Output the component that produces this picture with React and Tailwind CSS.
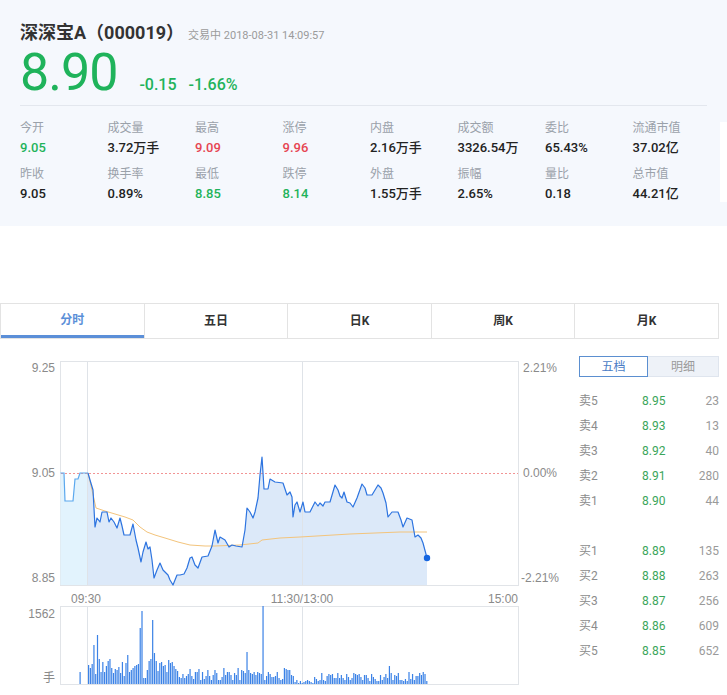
import React from "react";

const stats = [
  { label: "今开", value: "9.05", tone: "green" },
  { label: "成交量", value: "3.72万手" },
  { label: "最高", value: "9.09", tone: "red" },
  { label: "涨停", value: "9.96", tone: "red" },
  { label: "内盘", value: "2.16万手" },
  { label: "成交额", value: "3326.54万" },
  { label: "委比", value: "65.43%" },
  { label: "流通市值", value: "37.02亿" },
  { label: "昨收", value: "9.05" },
  { label: "换手率", value: "0.89%" },
  { label: "最低", value: "8.85", tone: "green" },
  { label: "跌停", value: "8.14", tone: "green" },
  { label: "外盘", value: "1.55万手" },
  { label: "振幅", value: "2.65%" },
  { label: "量比", value: "0.18" },
  { label: "总市值", value: "44.21亿" },
];

const tabs = ["分时", "五日", "日K", "周K", "月K"];

const sells = [
  ["卖5", "8.95", "23"],
  ["卖4", "8.93", "13"],
  ["卖3", "8.92", "40"],
  ["卖2", "8.91", "280"],
  ["卖1", "8.90", "44"],
];
const buys = [
  ["买1", "8.89", "135"],
  ["买2", "8.88", "263"],
  ["买3", "8.87", "256"],
  ["买4", "8.86", "609"],
  ["买5", "8.85", "652"],
];

// price line, page coordinates
const pre = [[60.5,473],[64,473],[65,501],[73,501],[75,479],[78,479],[80,473],[88,473]];
const line = [[88,473],[90,480],[93,490],[95,527],[97,518],[100,522],[102,512],[107,512],[109,522],[111,518],[114,522],[117,528],[120,518],[122,526],[124,535],[130,535],[133,524],[136,540],[138,548],[141,562],[143,552],[146,542],[148,549],[150,547],[152,560],[154,578],[157,570],[160,563],[163,570],[165,572],[168,575],[170,580],[173,585],[175,580],[177,575],[180,575],[184,574],[187,568],[190,558],[192,557],[195,565],[198,568],[202,557],[208,556],[212,546],[215,530],[218,543],[220,537],[225,540],[229,547],[232,545],[236,546],[242,547],[245,530],[247,508],[250,512],[253,518],[255,512],[258,498],[260,475],[262,457],[264,489],[268,489],[270,479],[275,482],[283,483],[287,495],[290,492],[292,497],[293,517],[295,505],[297,502],[300,512],[303,502],[305,512],[310,512],[313,506],[315,502],[318,506],[320,503],[323,506],[325,502],[330,502],[335,485],[338,490],[340,496],[342,498],[344,492],[347,502],[350,503],[353,507],[357,498],[362,484],[365,488],[367,495],[372,495],[375,490],[378,485],[381,488],[383,493],[386,503],[388,517],[392,512],[398,512],[401,520],[403,527],[407,518],[412,520],[415,537],[418,535],[421,538],[423,543],[427,558]];
const avg = [[88,473],[92,490],[96,508],[105,511],[115,514],[125,517],[133,520],[140,527],[147,532],[155,535],[165,538],[178,542],[190,545],[205,546],[215,546],[240,545],[258,543],[262,540],[280,538],[300,537],[350,534],[400,532],[427,532]];

const toPath = (pts) => pts.map((p, i) => (i ? "L" : "M") + p[0] + " " + p[1]).join(" ");
const toArea = (pts) => toPath(pts) + ` L${pts[pts.length - 1][0]} 585 L${pts[0][0]} 585 Z`;

// volume bars
const spikes = { 3: 39, 5: 49, 6: 25, 22: 29, 29: 56, 30: 73, 35: 25, 36: 64, 37: 31, 89: 32, 98: 78, 169: 18 };
let seed = 11;
const rnd = () => {
  seed = (seed * 9301 + 49297) % 233280;
  return seed / 233280;
};
const bars = [];
for (let i = 0; i <= 190; i++) {
  let base = i < 50 ? 26 : i < 120 ? 16 : 12;
  if (i >= 116 && i <= 126) base = 4;
  let h = Math.max(1, Math.round(base * (0.2 + rnd() * 0.8)));
  if (spikes[i]) h = spikes[i];
  if (i === 1 || i === 2) h = 12 + i * 4;
  bars.push({ x: 88 + i * 1.78, h });
}

function Chart() {
  const label = { fontFamily: "Liberation Sans, Arial, sans-serif", fontSize: 12, fill: "#8a8a8a" };
  return (
    <svg width="570" height="335" viewBox="0 355 570 335" className="block shrink-0">
      {/* price panel */}
      <rect x="60.5" y="361.5" width="458" height="224" fill="#fff" stroke="#e1e4e8" />
      <path d={toArea(pre)} fill="#e2f3fd" />
      <path d={toArea(line)} fill="#dce9f9" />
      <line x1="87.5" y1="362" x2="87.5" y2="585" stroke="#dfe3e8" />
      <line x1="302.5" y1="362" x2="302.5" y2="585" stroke="#dfe3e8" />
      <line x1="61" y1="473.5" x2="518" y2="473.5" stroke="#f29494" strokeDasharray="2 2" />
      <path d={toPath(pre)} fill="none" stroke="#5ba8ee" strokeWidth="1.2" />
      <path d={toPath(avg)} fill="none" stroke="#f3c47c" strokeWidth="1" />
      <path d={toPath(line)} fill="none" stroke="#2d74e0" strokeWidth="1.2" strokeLinejoin="round" />
      <circle cx="427" cy="558" r="3.2" fill="#1565e0" />
      <text x="55" y="372" textAnchor="end" {...label}>9.25</text>
      <text x="55" y="477" textAnchor="end" {...label}>9.05</text>
      <text x="55" y="582" textAnchor="end" {...label}>8.85</text>
      <text x="523" y="372" {...label}>2.21%</text>
      <text x="523" y="477" {...label}>0.00%</text>
      <text x="521" y="582" {...label}>-2.21%</text>
      <text x="71" y="603" {...label}>09:30</text>
      <text x="302" y="603" textAnchor="middle" {...label}>11:30/13:00</text>
      <text x="518" y="603" textAnchor="end" {...label}>15:00</text>

      {/* volume panel */}
      <rect x="60.5" y="606.5" width="458" height="78" fill="#fff" stroke="#e1e4e8" />
      <line x1="87.5" y1="607" x2="87.5" y2="684" stroke="#dfe3e8" />
      <line x1="302.5" y1="607" x2="302.5" y2="684" stroke="#dfe3e8" />
      <rect x="79.5" y="672" width="1.2" height="12" fill="#3b82e6" />
      {bars.map((b, i) => (
        <rect key={i} x={b.x} y={684 - b.h} width="1.2" height={b.h} fill="#3b82e6" />
      ))}
      <text x="55" y="618" textAnchor="end" {...label}>1562</text>
      <text x="55" y="682" textAnchor="end" {...label} fontFamily="Noto Sans CJK SC, sans-serif">手</text>
    </svg>
  );
}

function BookRow({ row }) {
  return (
    <div className="flex items-center h-[25px] text-[12px]">
      <span className="w-[63px] text-[#8c8c8c]">{row[0]}</span>
      <span className="w-[40px] text-[#3aa55a]">{row[1]}</span>
      <span className="flex-1 text-right text-[#9a9a9a]">{row[2]}</span>
    </div>
  );
}

export default function App() {
  return (
    <div className="w-[727px] h-[695px] bg-white font-['Roboto','Noto_Sans_CJK_SC',sans-serif] overflow-hidden">
      {/* Quote Header */}
      <div className="relative h-[226px] bg-[#f5f8fd] pt-[19px] px-[20px]">
        <div className="flex items-baseline h-[24px]">
          <span className="text-[18px] font-bold text-[#333]">深深宝A（000019）</span>
          <span className="ml-[4px] text-[11px] text-[#9b9b9b]">交易中 2018-08-31 14:09:57</span>
        </div>
        <div className="flex items-baseline h-[54px] mt-[3px]">
          <span className="text-[52px] leading-[54px] tracking-[-1px] text-[#1fb35b]">8.90</span>
          <span className="ml-[22px] text-[16px] font-medium text-[#1fb35b]">-0.15</span>
          <span className="ml-[12px] text-[16px] font-medium text-[#1fb35b]">-1.66%</span>
        </div>
        <div className="h-px bg-[#e3e7ee] mt-[5px]" />
        <div className="grid grid-cols-8 w-[700px] gap-y-[8px] mt-[13px]">
          {stats.map((s) => (
            <div key={s.label} className="flex flex-col">
              <span className="h-[18px] leading-[18px] text-[12px] text-[#9aa1aa]">{s.label}</span>
              <span
                className={
                  "h-[18px] leading-[18px] mt-[2px] text-[13px] font-medium " +
                  (s.tone === "green" ? "text-[#1fb35b]" : s.tone === "red" ? "text-[#e64552]" : "text-[#222]")
                }
              >
                {s.value}
              </span>
            </div>
          ))}
        </div>
        <div className="absolute right-0 top-[122px] w-[7px] h-[80px] bg-white" />
      </div>

      {/* Period Tabs */}
      <div className="mt-[77px] w-[719px] flex border border-[#e3e3e3]">
        {tabs.map((t, i) => (
          <div
            key={t}
            className={
              "flex-1 h-[34px] flex items-center justify-center text-[12px] font-bold " +
              (i > 0 ? "border-l border-[#e3e3e3] " : "") +
              (i === 0 ? "text-[#5b8fd8] border-b-[3px] border-b-[#5b8fd8]" : "text-[#333]")
            }
          >
            {t}
          </div>
        ))}
      </div>

      {/* Chart + Order book */}
      <div className="flex mt-[16px]">
        <Chart />
        <div className="ml-[9px] w-[140px] mt-[1px]">
          <div className="flex h-[21px] text-[12px]">
            <div className="w-[69px] flex items-center justify-center border border-[#5b8fd0] text-[#4a7cc5]">五档</div>
            <div className="flex-1 flex items-center justify-center bg-[#eef2f8] border border-l-0 border-[#dfe5ee] text-[#9a9a9a]">明细</div>
          </div>
          <div className="mt-[11px]">
            {sells.map((r) => (
              <BookRow key={r[0]} row={r} />
            ))}
          </div>
          <div className="mt-[25px]">
            {buys.map((r) => (
              <BookRow key={r[0]} row={r} />
            ))}
          </div>
        </div>
      </div>
    </div>
  );
}
